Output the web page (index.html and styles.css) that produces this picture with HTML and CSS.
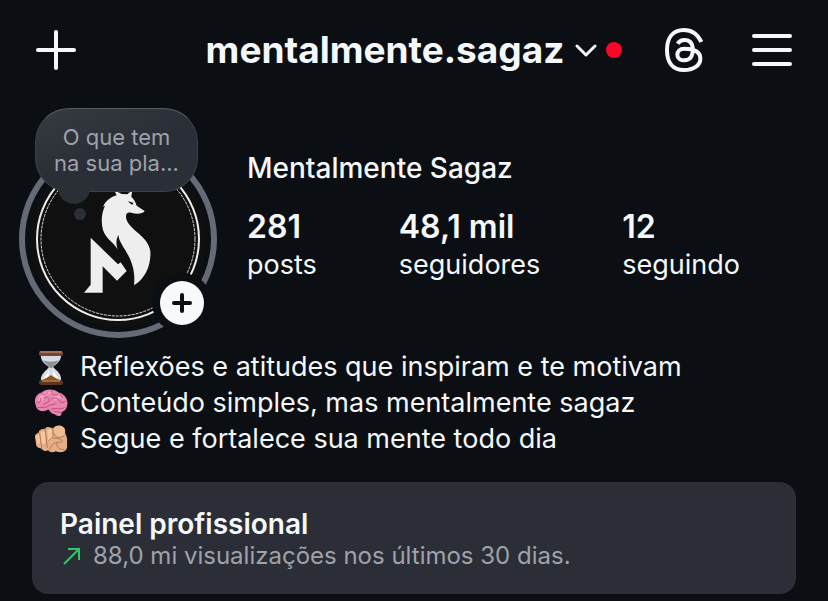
FILE: index.html
```
<!DOCTYPE html>
<html lang="pt-BR">
  <head>
    <meta charset="utf-8">
    <meta name="viewport" content="width=device-width, initial-scale=1">
    <title>mentalmente.sagaz</title>
    <link rel="stylesheet" href="styles.css">
  </head>
  <body>
    <header class="topbar">
      <button class="icon-btn new-post" type="button" aria-label="Criar">
        <svg width="40" height="40" viewBox="0 0 40 40"><path d="M20 2v36M2 20h36"/></svg>
      </button>
      <button class="account" type="button">
        <span class="username">mentalmente.sagaz</span>
        <svg class="chevron" width="22" height="14" viewBox="0 0 22 14"><path d="M2 3l9 9 9-9"/></svg>
        <span class="dot"></span>
      </button>
      <div class="actions">
        <a class="icon-btn" href="#" aria-label="Threads">
          <svg class="threads" width="38" height="44" viewBox="315 54 114 132">
            <path d="M424 96C412 71 397 60 372 60C338 60 321 84 321 120C321 157 338 180 372 180C400 180 421 166 421 146C421 122 396 116 373 116C358 116 352 125 352 134C352 145 362 151 373 151C393 151 400 136 398 112C396 96 386 90 373 90C363 90 357 94 353 101"/>
          </svg>
        </a>
        <button class="icon-btn" type="button" aria-label="Menu">
          <svg width="40" height="40" viewBox="0 0 40 40"><path d="M2 6h36M2 20h36M2 34h36"/></svg>
        </button>
      </div>
    </header>

    <main>
      <section class="profile">
        <div class="avatar">
          <svg width="200" height="200" viewBox="0 0 200 200">
            <circle class="story-ring" cx="100" cy="100" r="96"/>
            <circle class="photo" cx="100" cy="100" r="88"/>
            <circle class="line-solid" cx="100" cy="100" r="81"/>
            <circle class="line-dashed" cx="100" cy="100" r="77"/>
            <!-- fox and letter -->
            <g transform="translate(52 31) scale(.3333)">
              <path class="fox" d="M132 60L140 76C120 82 108 92 99 110L105 107C95 128 92 155 99 180C107 206 132 218 143 238C137 220 139 206 145 195C148 232 201 262 192 346C226 326 244 285 241 243C236 200 180 180 170 150C164 132 172 124 186 129C200 133 219 132 224 123L200 107C196 94 191 86 184 80L187 60L172 73L155 72Z"/>
              <path class="fox" d="M62 203L144 283L152 277L170 303L141 332L98 289V368H42L62 344Z"/>
              <path class="eye" d="M173 94l17 4-3 7z"/>
            </g>
            <circle class="badge-gap" cx="164" cy="164" r="30"/>
          </svg>
          <button class="note" type="button">O que tem<br>na sua pla...</button>
          <button class="add-story" type="button" aria-label="Adicionar ao story">
            <svg width="20" height="20" viewBox="0 0 20 20"><path d="M10 2v16M2 10h16"/></svg>
          </button>
        </div>
        <div class="info">
          <h1>Mentalmente Sagaz</h1>
          <div class="stats">
            <a href="#"><strong>281</strong>posts</a>
            <a href="#"><strong>48,1 mil</strong>seguidores</a>
            <a href="#"><strong>12</strong>seguindo</a>
          </div>
        </div>
      </section>

      <ul class="bio">
        <li>
          <svg width="34" height="36" viewBox="0 0 34 36">
            <path fill="#d6dde2" d="M7 5H27C28 12 22 15 19 18C23 22 28 25 27 32H7C6 25 12 22 15 18C11 15 6 12 7 5Z"/>
            <path fill="#8d9298" d="M9 11C14 13 20 13 25 11C23 15 19 16 18 19H16C15 16 11 15 9 11Z"/>
            <path fill="#fff" d="M15 21L9 31H14ZM19 21L25 31H20Z"/>
            <path fill="#8a5330" d="M8 31C12 29 15 28 17 26C19 28 22 29 26 31Z"/>
            <rect fill="#704738" x="5" y="2" width="24" height="5" rx="2"/>
            <rect fill="#a4705a" x="6" y="2" width="22" height="2" rx="1"/>
            <rect fill="#5b3422" x="5" y="31" width="24" height="5" rx="2"/>
            <path fill="#a96b35" d="M8 31h18v2H8z"/>
          </svg>
          Reflexões e atitudes que inspiram e te motivam
        </li>
        <li>
          <svg width="36" height="36" viewBox="0 0 36 36">
            <path fill="#e984ae" d="M2 21C-1 14 3 8 8 7C13 2 22 3 26 7C32 8 37 15 35 21C34 26 31 27 29 28C30 32 25 33 22 30C18 30 17 26 15 25C10 28 3 27 2 21Z"/>
            <path fill="#f5a5c5" d="M5 13C8 7 17 4 23 8C17 7 11 10 9 15C7 17 4 17 5 13ZM20 12C24 8 30 10 32 15C28 12 24 13 21 16Z"/>
            <g fill="none" stroke="#b94d80" stroke-linecap="round">
              <path d="M3 18C6 18 8 16 7 13M8 8C10 10 13 10 14 7M11 12C14 11 17 13 16 16C15 18 11 17 10 20M19 5C18 9 22 11 25 9M19 14C22 11 26 13 27 16C28 18 31 18 33 16M4 23C8 22 12 24 15 21C18 19 22 21 23 18M18 25C22 22 27 26 32 23M22 27L28 28M28 9L30 13"/>
            </g>
          </svg>
          Conteúdo simples, mas mentalmente sagaz
        </li>
        <li>
          <svg width="36" height="36" viewBox="0 0 36 36">
            <path fill="#e4ad83" d="M1 16C1 12 4 12 5 11C6 7 10 8 12 7C14 4 18 6 20 7C23 2 32 3 33 9C32 13 36 15 35 21V27C34 32 28 33 23 31C20 33 16 32 15 30C11 32 8 29 8 28C4 28 2 26 2 22Z"/>
            <path fill="#f3c7a0" d="M2 16Q4 12 6 14L7 21L4 24ZM7 11Q10 8 12 12L12 23L8 23ZM14 9Q18 5 20 10L20 18L15 20Z"/>
            <circle fill="#efbd93" cx="27" cy="10" r="6"/>
            <path fill="none" stroke="#b77650" stroke-linecap="round" d="M6 12L8 27M12 8L14 27M20 8V16M21 12C23 17 28 18 32 14M15 20C19 14 29 18 30 20C28 23 23 20 20 24C17 27 17 29 16 30M24 23C24 27 28 30 32 29"/>
          </svg>
          Segue e fortalece sua mente todo dia
        </li>
      </ul>

      <a class="panel" href="#">
        <h2>Painel profissional</h2>
        <p>
          <svg class="trend" width="18" height="18" viewBox="0 0 18 18"><path d="M1 17L16 2M5 2H16V13"/></svg>
          88,0 mi visualizações nos últimos 30 dias.
        </p>
      </a>
    </main>
  </body>
</html>
```

FILE: styles.css
```
* { box-sizing: border-box; }
body {
  margin: 0;
  background-color: #0b0f13;
  color: #f5f8fa;
  font-family: Inter, "Liberation Sans", sans-serif;
  font-size: 27px;
}
h1, h2, p, ul { margin: 0; padding: 0; }
a { color: inherit; text-decoration: none; }
button {
  padding: 0;
  border: 0;
  background: none;
  color: inherit;
  font-family: inherit;
  cursor: pointer;
}
svg { display: block; flex: none; }

.topbar {
  display: grid;
  grid-template-columns: 1fr auto 1fr;
  align-items: center;
  height: 100px;
  padding: 0 36px;
}
.topbar path {
  fill: none;
  stroke: #f5f8fa;
  stroke-width: 4;
  stroke-linecap: round;
}
.new-post { justify-self: start; }
.topbar .threads path { stroke-width: 12; stroke-linecap: butt; }
.topbar .chevron path { stroke-width: 3; stroke-linejoin: round; }
.account { display: flex; align-items: center; }
.username { font-size: 37px; font-weight: 700; line-height: 48px; }
.chevron { margin: 0 9px 0 11px; }
.dot { width: 16px; height: 16px; border-radius: 50%; background-color: #ff0429; }
.actions {
  display: flex;
  align-items: center;
  justify-content: flex-end;
  gap: 49px;
}

.profile { display: flex; gap: 29px; padding: 8px 18px 0; }
.avatar { position: relative; flex: none; padding-top: 31px; }
.avatar circle { fill: none; }
.avatar .story-ring { stroke: #656a76; stroke-width: 6; }
.avatar .photo { fill: #101010; }
.avatar .line-solid { stroke: #eee; stroke-width: 2; }
.avatar .line-dashed { stroke: #ddd; stroke-dasharray: 3 1; }
.avatar .badge-gap { fill: #0b0f13; }
.fox { fill: #eee; }
.eye { fill: #101010; }

.note {
  position: absolute;
  top: 0;
  left: 17px;
  width: 163px;
  height: 84px;
  border: 1px solid #3c4149;
  border-top-color: #575b62;
  border-radius: 34px;
  background: linear-gradient(160deg, #373a41, #2a2e36 50%);
  color: #9fa2aa;
  font-size: 22px;
  line-height: 26px;
}
.note:before, .note:after {
  content: '';
  position: absolute;
  border-radius: 50%;
  background-color: #2a2e35;
}
.note:before { left: 22px; bottom: -13px; width: 32px; height: 32px; }
.note:after { left: 38px; bottom: -29px; width: 12px; height: 12px; }
.add-story {
  position: absolute;
  right: 14px;
  bottom: 14px;
  display: flex;
  align-items: center;
  justify-content: center;
  width: 44px;
  height: 44px;
  border-radius: 50%;
  background-color: #f7f9fb;
}
.add-story path { stroke: #0b0f13; stroke-width: 4; stroke-linecap: round; }

.info { padding-top: 42px; }
h1 { font-size: 28px; font-weight: 500; line-height: 36px; }
.stats { display: flex; gap: 82px; margin-top: 22px; }
.stats a { line-height: 38px; }
.stats strong { display: block; font-size: 32px; font-weight: 600; }

.bio { margin-top: 10px; padding: 0 34px; list-style: none; }
.bio li { display: flex; line-height: 36px; }
.bio svg { width: 34px; margin-right: 12px; }

.panel {
  display: block;
  margin: 25px 32px 8px;
  padding: 26px 28px 22px;
  border-radius: 16px;
  background-color: #2b2e36;
}
h2 { font-size: 28px; font-weight: 600; line-height: 32px; }
.panel p {
  display: flex;
  align-items: center;
  gap: 12px;
  padding-left: 3px;
  color: #9fa2aa;
  font-size: 24px;
  line-height: 32px;
}
.trend path { fill: none; stroke: #35c66b; stroke-width: 2; }
```
